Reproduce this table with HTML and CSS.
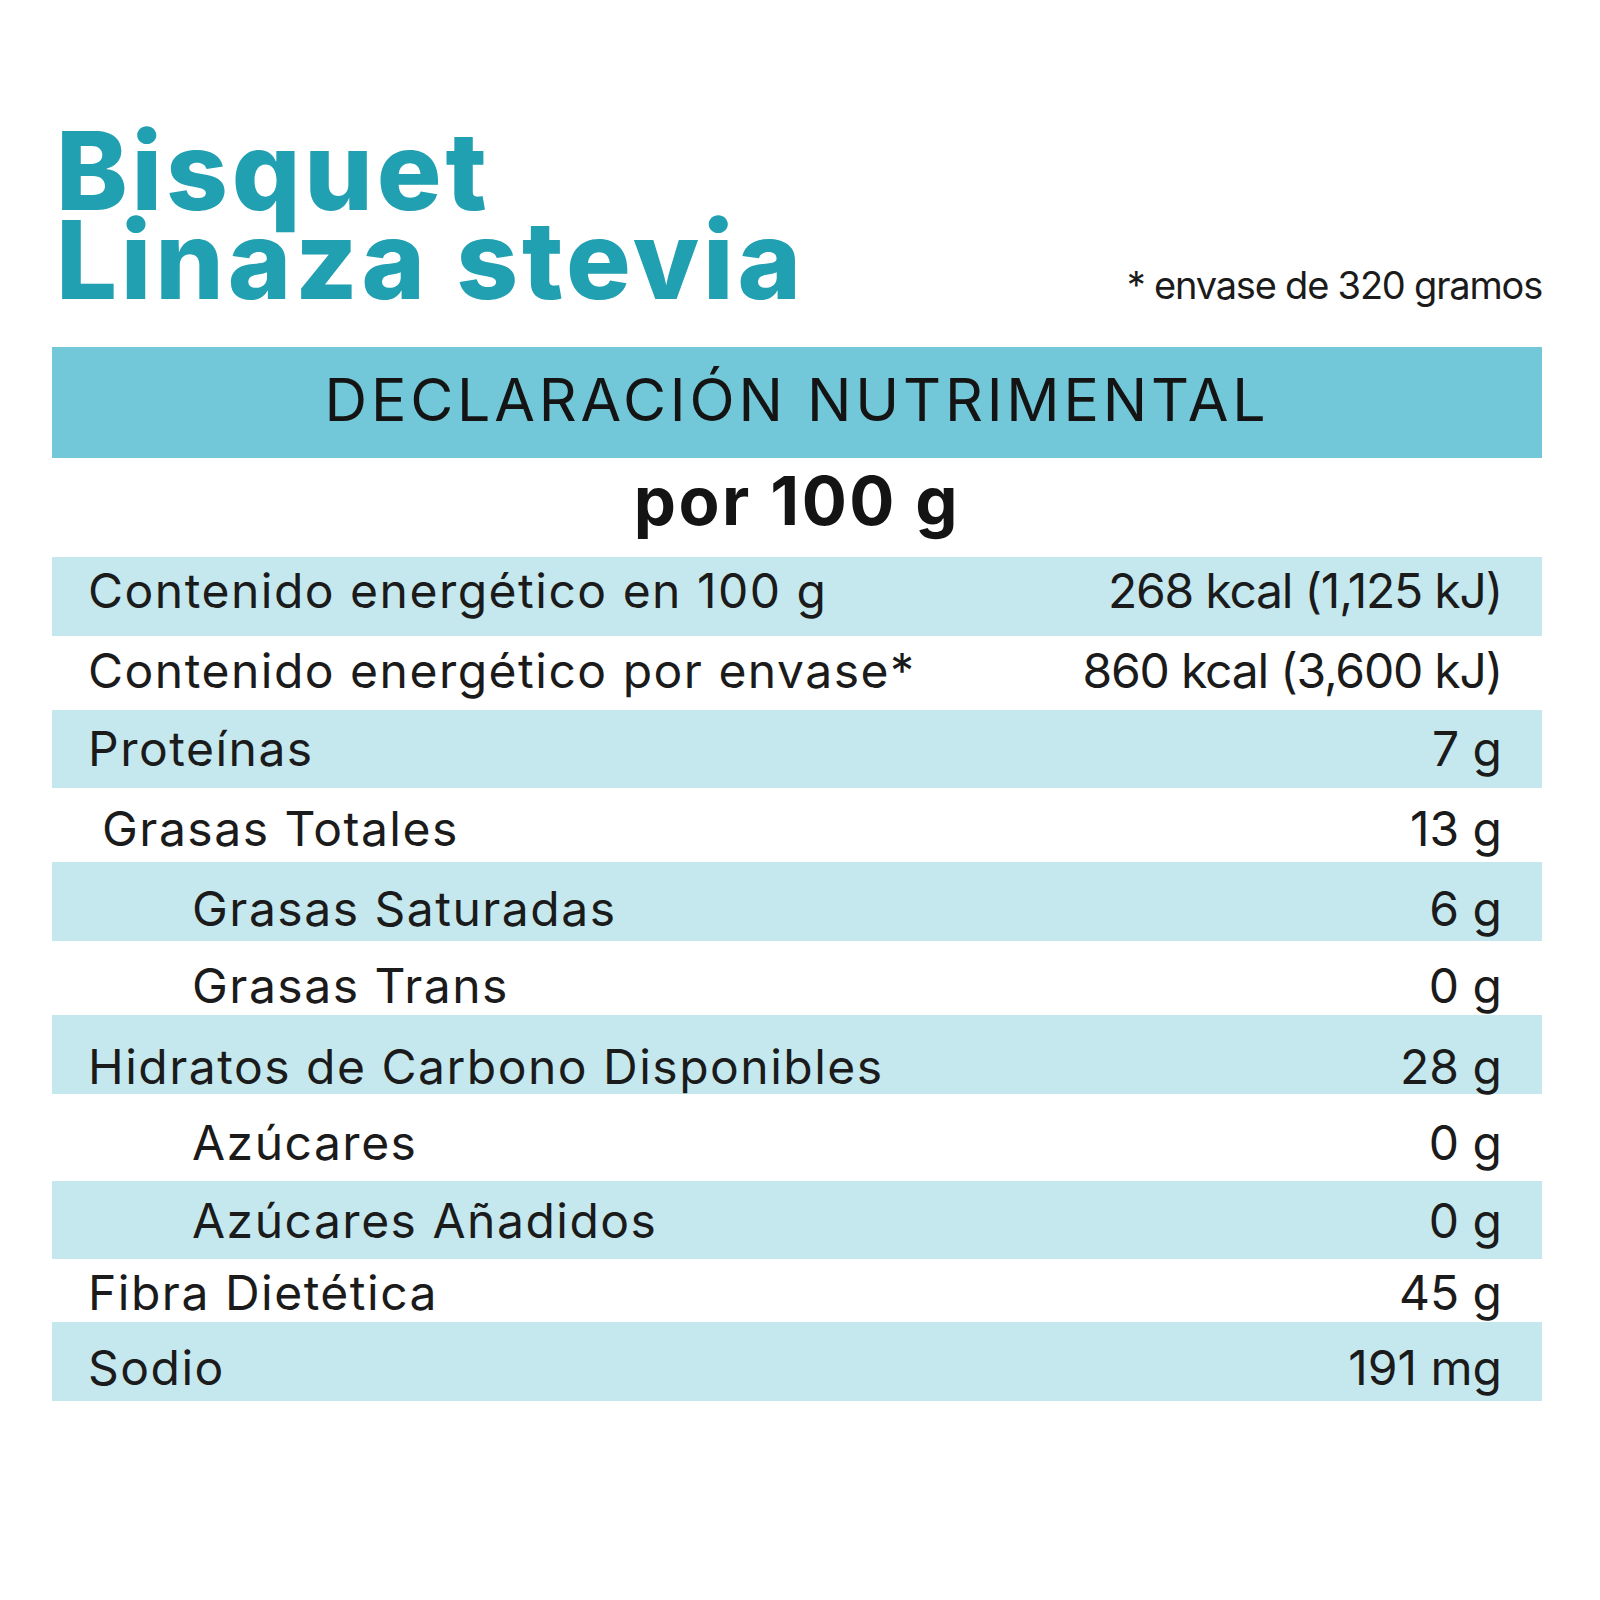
FILE: index.html
```html
<!DOCTYPE html>
<html lang="es">
<head>
<meta charset="utf-8">
<title>Bisquet Linaza stevia</title>
<link rel="stylesheet" href="styles.css">
</head>
<body>
<main class="page">
  <header class="top">
    <h1 class="title"><span class="line">Bisquet</span><span class="line">Linaza stevia</span></h1>
    <p class="note">* envase de 320 gramos</p>
  </header>
  <section class="table">
    <div class="bar">DECLARACIÓN NUTRIMENTAL</div>
    <div class="per">por 100 g</div>
    <div class="row shade r1"><span class="label">Contenido energético en 100 g</span><span class="value energy">268 kcal (1,125 kJ)</span></div>
    <div class="row r2"><span class="label">Contenido energético por envase*</span><span class="value energy">860 kcal (3,600 kJ)</span></div>
    <div class="row shade r3"><span class="label">Proteínas</span><span class="value">7 g</span></div>
    <div class="row r4"><span class="label ind1">Grasas Totales</span><span class="value">13 g</span></div>
    <div class="row shade r5"><span class="label ind2">Grasas Saturadas</span><span class="value">6 g</span></div>
    <div class="row r6"><span class="label ind2">Grasas Trans</span><span class="value">0 g</span></div>
    <div class="row shade r7"><span class="label">Hidratos de Carbono Disponibles</span><span class="value">28 g</span></div>
    <div class="row r8"><span class="label ind2">Azúcares</span><span class="value">0 g</span></div>
    <div class="row shade r9"><span class="label ind2">Azúcares Añadidos</span><span class="value">0 g</span></div>
    <div class="row r10"><span class="label">Fibra Dietética</span><span class="value">45 g</span></div>
    <div class="row shade r11"><span class="label">Sodio</span><span class="value">191 mg</span></div>
  </section>
</main>
</body>
</html>
```
FILE: styles.css
```css
html, body {
  margin: 0;
  padding: 0;
  background: #ffffff;
}

body {
  font-family: "Inter", "Open Sans", sans-serif;
  color: #1b1b1b;
}

.page {
  width: 1490px;
  margin-left: 52px;
  padding-top: 126px;
}

.top {
  display: flex;
  justify-content: space-between;
  align-items: last baseline;
  margin-bottom: 43px;
}

.title {
  margin: 0 0 0 4px;
  font-family: "Inter", sans-serif;
  font-weight: 800;
  font-size: 108px;
  line-height: 89px;
  letter-spacing: 3.8px;
  color: #21a0b2;
}

.title .line {
  display: block;
}

.note {
  margin: 0;
  font-size: 38px;
  line-height: 38px;
  letter-spacing: -1.2px;
  color: #1b1b1b;
}

.bar {
  height: 111px;
  background: #72c7d8;
  display: flex;
  align-items: center;
  justify-content: center;
  padding-bottom: 6px;
  box-sizing: border-box;
  font-size: 59px;
  letter-spacing: 3.8px;
  color: #141414;
}

.per {
  height: 99px;
  line-height: 86px;
  text-align: center;
  font-weight: 700;
  font-size: 67px;
  letter-spacing: 2.5px;
  color: #141414;
}

.row {
  display: flex;
  justify-content: space-between;
  align-items: flex-start;
  padding: 0 40px 0 36px;
  box-sizing: border-box;
  font-size: 48px;
  line-height: 58px;
}

.label {
  letter-spacing: 1.5px;
}

.energy {
  letter-spacing: -1.2px;
}

.shade {
  background: #c5e8ef;
}

.r1  { height: 79px; padding-top: 5px; }
.r2  { height: 74px; padding-top: 6px; }
.r3  { height: 78px; padding-top: 10px; }
.r4  { height: 74px; padding-top: 12px; }
.r5  { height: 79px; padding-top: 18px; }
.r6  { height: 74px; padding-top: 16px; }
.r7  { height: 79px; padding-top: 23px; }
.r8  { height: 87px; padding-top: 20px; }
.r9  { height: 78px; padding-top: 11px; }
.r10 { height: 63px; padding-top: 5px; }
.r11 { height: 79px; padding-top: 17px; }

.ind1 { padding-left: 14px; }
.ind2 { padding-left: 104px; }
```
